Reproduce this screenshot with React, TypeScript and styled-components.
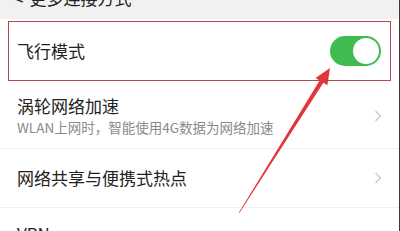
import styled, { createGlobalStyle } from "styled-components";

const GlobalStyle = createGlobalStyle`
  html, body {
    margin: 0;
    padding: 0;
    background: #ffffff;
  }
  body {
    font-family: "Noto Sans CJK SC", "Noto Sans", sans-serif;
  }
`;

const Screen = styled.div`
  position: relative;
  width: 400px;
  height: 231px;
  overflow: hidden;
  background: #ffffff;
  border-right: 1px solid #3a3a3a;
  box-sizing: border-box;
`;

const Header = styled.div`
  height: 19px;
  background: #f1f1f1;
  overflow: hidden;
  display: flex;
  align-items: flex-end;
  padding-left: 14px;
`;

const HeaderTitle = styled.div`
  font-size: 17px;
  line-height: 17px;
  color: #222;
  margin-bottom: 13px;
  display: flex;
  gap: 6px;
`;

const List = styled.div`
  display: flex;
  flex-direction: column;
`;

const Row = styled.div<{ $height: number; $divider?: boolean; $top?: number }>`
  height: ${(p) => p.$height}px;
  display: flex;
  align-items: ${(p) => (p.$top !== undefined ? "flex-start" : "center")};
  justify-content: space-between;
  padding: ${(p) => p.$top ?? 0}px 20px 0 17px;
  border-bottom: ${(p) => (p.$divider ? "1px solid #efefef" : "none")};
  box-sizing: border-box;
`;

const TextBlock = styled.div`
  display: flex;
  flex-direction: column;
  gap: 5px;
`;

const Title = styled.div`
  font-size: 17px;
  line-height: 18px;
  color: #222;
`;

const Subtitle = styled.div`
  font-size: 13.5px;
  line-height: 14px;
  color: #8a8a8a;
`;

const Toggle = styled.div<{ $on: boolean }>`
  width: 51px;
  height: 30px;
  border-radius: 15px;
  background: ${(p) => (p.$on ? "#3fbb4f" : "#dcdcdc")};
  display: flex;
  align-items: center;
  justify-content: ${(p) => (p.$on ? "flex-end" : "flex-start")};
  padding: 0 2px;
  box-sizing: border-box;
  margin-right: -2px;
`;

const Knob = styled.div`
  width: 26px;
  height: 26px;
  border-radius: 50%;
  background: #ffffff;
`;

const Highlight = styled.div`
  position: absolute;
  left: 8px;
  top: 21px;
  width: 383px;
  height: 60px;
  border: 1px solid #b0494b;
  box-sizing: border-box;
  pointer-events: none;
`;

const ArrowLayer = styled.svg`
  position: absolute;
  left: 0;
  top: 0;
  pointer-events: none;
`;

const ChevronIcon = styled.svg`
  margin-right: -3px;
  flex: none;
`;

const Chevron = () => (
  <ChevronIcon width="8" height="12" viewBox="0 0 8 12">
    <path d="M1.5 1 L6.5 6 L1.5 11" fill="none" stroke="#c9c9c9" strokeWidth="1.3" />
  </ChevronIcon>
);

export default function App() {
  return (
    <>
      <GlobalStyle />
      <Screen>
        <Header>
          <HeaderTitle>
            <span>&lt;</span>
            <span>更多连接方式</span>
          </HeaderTitle>
        </Header>
        <List>
          <Row $height={64}>
            <Title>飞行模式</Title>
            <Toggle $on>
              <Knob />
            </Toggle>
          </Row>
          <Row $height={66} $divider>
            <TextBlock>
              <Title>涡轮网络加速</Title>
              <Subtitle>WLAN上网时，智能使用4G数据为网络加速</Subtitle>
            </TextBlock>
            <Chevron />
          </Row>
          <Row $height={59} $divider>
            <Title>网络共享与便携式热点</Title>
            <Chevron />
          </Row>
          <Row $height={50} $top={17}>
            <Title>VPN</Title>
          </Row>
        </List>
        <Highlight />
        <ArrowLayer width="400" height="231" viewBox="0 0 400 231">
          <polygon
            points="330,68 315.6,77.9 319.6,80.4 238.6,213 239.4,213 323.4,82.8 327.4,85.3"
            fill="#e2363a"
          />
        </ArrowLayer>
      </Screen>
    </>
  );
}
